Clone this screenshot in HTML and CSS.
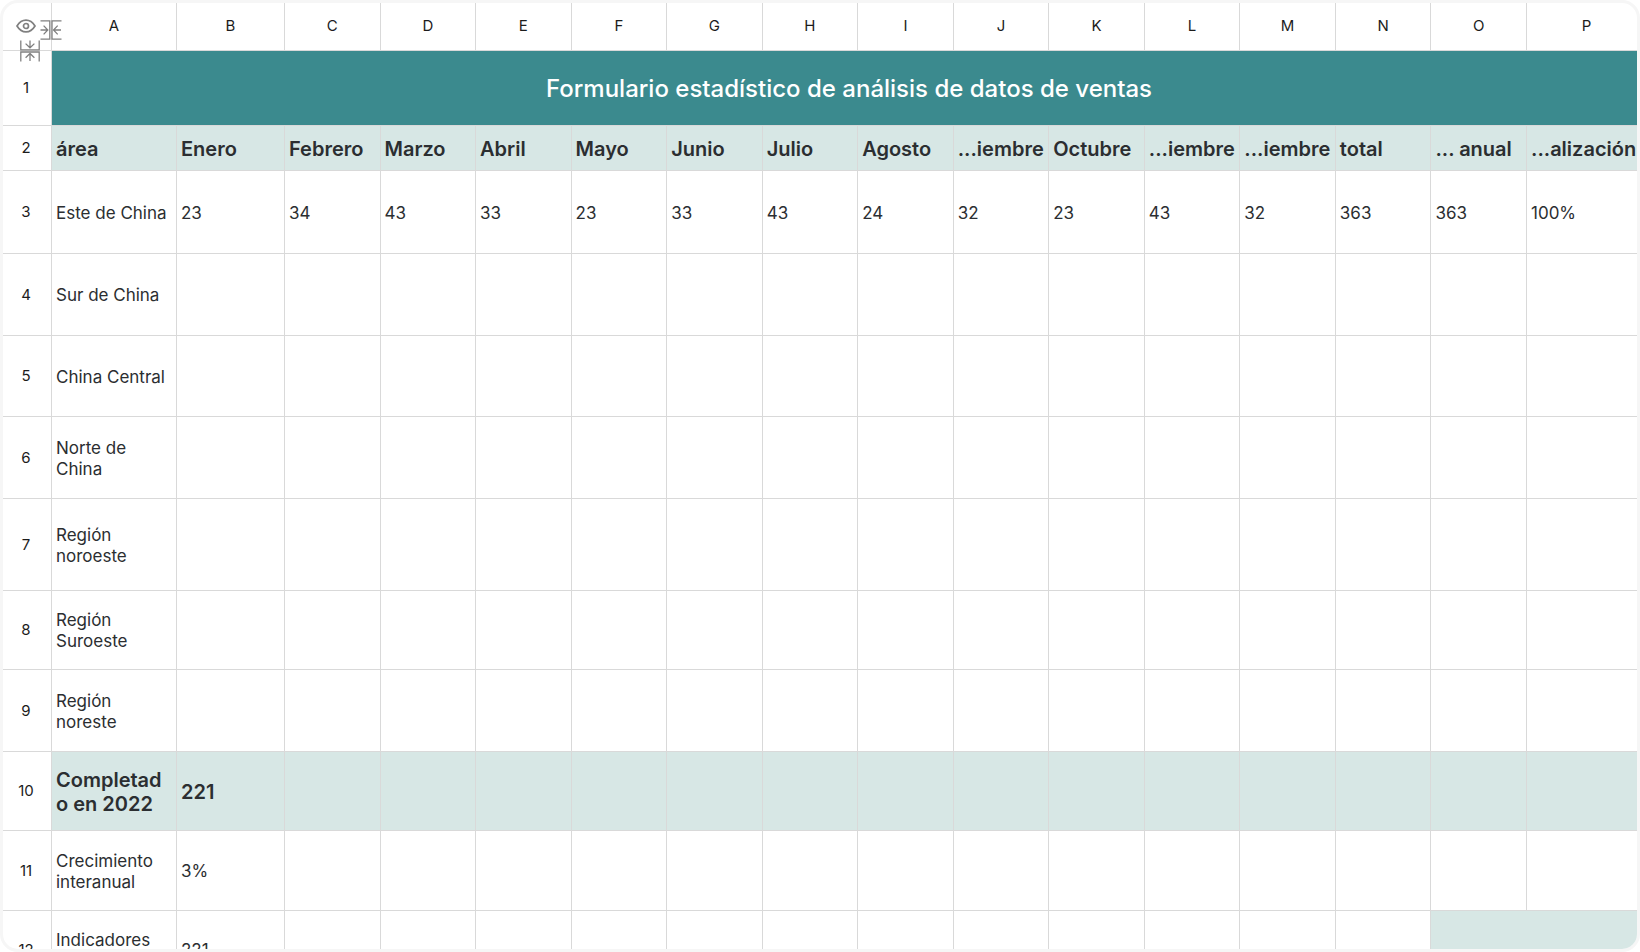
FILE: index.html
```html
<!DOCTYPE html>
<html lang="es">
<head>
    <meta charset="UTF-8">
    <meta name="viewport" content="width=device-width, initial-scale=1.0">
    <title>Formulario estadístico de análisis de datos de ventas</title>
    <link rel="stylesheet" href="styles.css">
</head>
<body>
    <div class="sheet">
        <table class="grid">
            <colgroup>
                <col class="col-index">
                <col class="col-area">
                <col class="col-first">
                <col span="13">
                <col class="col-last">
            </colgroup>
            <thead>
                <tr class="letters">
                    <th class="corner">
                        <button type="button" class="eye" aria-label="Mostrar u ocultar">
                            <svg width="20" height="14" viewBox="0 0 20 14" fill="none" stroke="#808080" stroke-width="1.7">
                                <path d="M1 7C3.3 3.2 6.3 1.1 10 1.1S16.7 3.2 19 7C16.7 10.8 13.7 12.9 10 12.9S3.3 10.8 1 7Z"/>
                                <circle cx="10" cy="7" r="2.5"/>
                            </svg>
                        </button>
                        <button type="button" class="resize resize-col" aria-label="Ajustar columna">
                            <svg width="22" height="20" viewBox="0 0 22 20" fill="none" stroke="#808080" stroke-width="1.3">
                                <path d="M0.5 0.8H9.8V19.2H0.5M21.5 0.8H12V19.2H21.5"/>
                                <path d="M0.5 10H7.5M3.6 5.6L7.8 10L3.6 14.4M21 10H13.8M17.7 5.6L13.5 10L17.7 14.4"/>
                            </svg>
                        </button>
                        <button type="button" class="resize resize-row" aria-label="Ajustar fila">
                            <svg width="20" height="22" viewBox="0 0 20 22" fill="none" stroke="#808080" stroke-width="1.3">
                                <path d="M0.8 0.5V9.8H19.2V0.5M0.8 21.5V12H19.2V21.5"/>
                                <path d="M10 0.5V7.5M5.6 3.6L10 7.8L14.4 3.6M10 21V13.8M5.6 17.7L10 13.5L14.4 17.7"/>
                            </svg>
                        </button>
                    </th>
                    <th>A</th><th>B</th><th>C</th><th>D</th><th>E</th><th>F</th><th>G</th><th>H</th>
                    <th>I</th><th>J</th><th>K</th><th>L</th><th>M</th><th>N</th><th>O</th><th>P</th>
                </tr>
            </thead>
            <tbody>
                <tr class="title-row">
                    <th>1</th>
                    <td colspan="16">Formulario estadístico de análisis de datos de ventas</td>
                </tr>
                <tr class="months shaded">
                    <th>2</th>
                    <td>área</td><td>Enero</td><td>Febrero</td><td>Marzo</td><td>Abril</td><td>Mayo</td><td>Junio</td><td>Julio</td>
                    <td>Agosto</td><td>...iembre</td><td>Octubre</td><td>...iembre</td><td>...iembre</td><td>total</td><td>... anual</td><td>...alización</td>
                </tr>
                <tr class="row-3">
                    <th>3</th>
                    <td>Este de China</td><td>23</td><td>34</td><td>43</td><td>33</td><td>23</td><td>33</td><td>43</td>
                    <td>24</td><td>32</td><td>23</td><td>43</td><td>32</td><td>363</td><td>363</td><td>100%</td>
                </tr>
                <tr class="row-4">
                    <th>4</th>
                    <td>Sur de China</td><td></td><td></td><td></td><td></td><td></td><td></td><td></td>
                    <td></td><td></td><td></td><td></td><td></td><td></td><td></td><td></td>
                </tr>
                <tr class="row-5">
                    <th>5</th>
                    <td>China Central</td><td></td><td></td><td></td><td></td><td></td><td></td><td></td>
                    <td></td><td></td><td></td><td></td><td></td><td></td><td></td><td></td>
                </tr>
                <tr class="row-6">
                    <th>6</th>
                    <td>Norte de<br>China</td><td></td><td></td><td></td><td></td><td></td><td></td><td></td>
                    <td></td><td></td><td></td><td></td><td></td><td></td><td></td><td></td>
                </tr>
                <tr class="row-7">
                    <th>7</th>
                    <td>Región<br>noroeste</td><td></td><td></td><td></td><td></td><td></td><td></td><td></td>
                    <td></td><td></td><td></td><td></td><td></td><td></td><td></td><td></td>
                </tr>
                <tr class="row-8">
                    <th>8</th>
                    <td>Región<br>Suroeste</td><td></td><td></td><td></td><td></td><td></td><td></td><td></td>
                    <td></td><td></td><td></td><td></td><td></td><td></td><td></td><td></td>
                </tr>
                <tr class="row-9">
                    <th>9</th>
                    <td>Región<br>noreste</td><td></td><td></td><td></td><td></td><td></td><td></td><td></td>
                    <td></td><td></td><td></td><td></td><td></td><td></td><td></td><td></td>
                </tr>
                <tr class="row-10 shaded">
                    <th>10</th>
                    <td>Completado en 2022</td><td>221</td><td></td><td></td><td></td><td></td><td></td><td></td>
                    <td></td><td></td><td></td><td></td><td></td><td></td><td></td><td></td>
                </tr>
                <tr class="row-11">
                    <th>11</th>
                    <td>Crecimiento<br>interanual</td><td>3%</td><td></td><td></td><td></td><td></td><td></td><td></td>
                    <td></td><td></td><td></td><td></td><td></td><td></td><td></td><td></td>
                </tr>
                <tr class="row-12">
                    <th>12</th>
                    <td>Indicadores<br>&nbsp;</td><td>221</td><td></td><td></td><td></td><td></td><td></td><td></td>
                    <td></td><td></td><td></td><td></td><td></td><td></td><td class="summary" colspan="2"></td>
                </tr>
            </tbody>
        </table>
    </div>
</body>
</html>
```
FILE: styles.css
```css
* {
    box-sizing: border-box;
}
body {
    font-family: Inter, "Liberation Sans", sans-serif;
    background-color: #fff;
    color: #2b2e31;
    margin: 0;
}
.sheet {
    height: 100vh;
    border: 3px solid #f6f6f6;
    border-radius: 18px;
    overflow: hidden;
}
/* last column runs a little past the frame */
.grid {
    width: calc(100% + 10px);
    table-layout: fixed;
    border-collapse: separate;
    border-spacing: 0;
}
.col-index {
    width: 49px;
}
.col-area {
    width: 125px;
}
.col-first {
    width: 108px;
}
.col-last {
    width: 120px;
}
th,
td {
    border-right: 1px solid #d9d9d9;
    border-bottom: 1px solid #d9d9d9;
    padding: 0;
    vertical-align: middle;
}
th {
    font-size: 15px;
    line-height: 20px;
    font-weight: 400;
    text-align: center;
    color: #1c1c1c;
}
tbody th {
    padding-right: 2px;
}
td {
    padding: 2px 4px 0;
    font-size: 17px;
    line-height: 21px;
    text-align: left;
    overflow-wrap: anywhere;
}
.letters {
    height: 48px;
}
.letters th {
    padding-bottom: 2px;
}
.letters .corner {
    position: relative;
    padding-right: 2px;
}
button {
    border: none;
    background: none;
    padding: 0;
    cursor: pointer;
}
button svg {
    display: block;
}
.eye {
    display: block;
    margin: 0 auto;
}
.resize {
    position: absolute;
}
.resize-col {
    left: 37px;
    top: 17px;
}
.resize-row {
    left: 17px;
    top: 37px;
}
.title-row {
    height: 75px;
}
.title-row td {
    background-color: #3b8a8e;
    color: #fff;
    font-size: 24px;
    line-height: 30px;
    font-weight: 500;
    text-align: center;
}
.shaded td {
    background-color: #d7e7e5;
    font-size: 20px;
    line-height: 24px;
    font-weight: 600;
}
.months {
    height: 45px;
}
.months td {
    white-space: nowrap;
}
.row-3 {
    height: 83px;
}
.row-4,
.row-6,
.row-9 {
    height: 82px;
}
.row-5 {
    height: 81px;
}
.row-7 {
    height: 92px;
}
.row-8,
.row-10 {
    height: 79px;
}
.row-11 {
    height: 80px;
}
.row-12 {
    height: 78px;
}
.summary {
    background-color: #d7e7e5;
}
```
